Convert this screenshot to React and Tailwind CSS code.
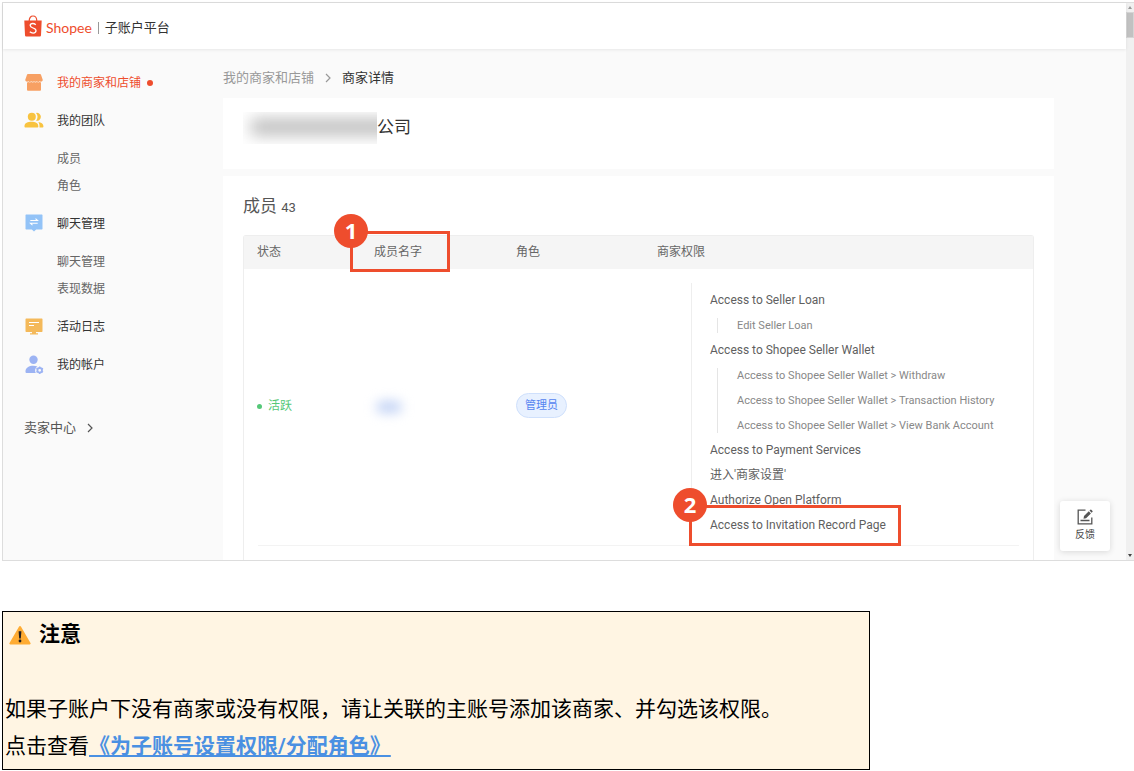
import React from "react";

const menu = [
  { label: "我的商家和店铺", icon: "shop", active: true },
  { label: "我的团队", icon: "team", children: ["成员", "角色"] },
  { label: "聊天管理", icon: "chat", children: ["聊天管理", "表现数据"] },
  { label: "活动日志", icon: "log" },
  { label: "我的帐户", icon: "account" },
];

const permissions = [
  { label: "Access to Seller Loan", children: ["Edit Seller Loan"] },
  {
    label: "Access to Shopee Seller Wallet",
    children: [
      "Access to Shopee Seller Wallet > Withdraw",
      "Access to Shopee Seller Wallet > Transaction History",
      "Access to Shopee Seller Wallet > View Bank Account",
    ],
  },
  { label: "Access to Payment Services" },
  { label: "进入'商家设置'" },
  { label: "Authorize Open Platform" },
  { label: "Access to Invitation Record Page", step: 2 },
];

const MenuIcon = ({ name }) => (
  <svg viewBox="0 0 20 20" className="h-5 w-5 shrink-0" aria-hidden="true">
    {name === "shop" && (
      <g fill="#f7a063">
        <path d="M4 1h12a1 1 0 0 1 1 .7l1.800 5.400a2 2 0 0 1-3.100 1.200 2.300 2.300 0 0 1-2.900 0 2.300 2.300 0 0 1-2.800 0 2.300 2.300 0 0 1-2.800 0 2.300 2.300 0 0 1-2.900 0 2 2 0 0 1-3.100-1.200L3 1.700a1 1 0 0 1 1-.7z" />
        <path d="M3 9.400c.6.100 1.100-.1 1.500-.4.9.6 1.900.6 2.800 0 .9.600 1.900.6 2.800 0 .9.600 1.900.6 2.800 0 .9.600 1.900.6 2.800 0 .4.300.8.4 1.300.4v7.400a.9.9 0 0 1-.9.900H3.900a.9.9 0 0 1-.9-.9z" />
      </g>
    )}
    {name === "team" && (
      <g fill="#f8c33f">
        <circle cx="7.800" cy="5.800" r="4" />
        <path d="M12 1.900a4 4 0 1 1 0 7.800 5.700 5.700 0 0 0 0-7.800z" />
        <path d="M.5 15c0-3 3.500-4.300 7-4.300s6.800 1.300 6.800 4.300v.7a.8.8 0 0 1-.8.800H1.300a.8.8 0 0 1-.8-.8z" />
        <path d="M14.200 11.100c2.900.4 5.200 1.600 5.200 3.900v.7a.8.8 0 0 1-.8.800h-3.100V15c0-1.600-.4-2.900-1.300-3.900z" />
      </g>
    )}
    {name === "chat" && (
      <>
        <path
          fill="#93c3f7"
          d="M2.200.5h15.600a.7.7 0 0 1 .7.700v13.600a.7.7 0 0 1-.7.700h-5.600L10 17.500l-2.200-2H2.200a.7.7 0 0 1-.7-.7V1.200a.7.700 0 0 1 .7-.7z"
        />
        <path
          d="M6.300 6.500h7.200l-2-1.800M13.700 9.300H6.500l2 1.800"
          fill="none"
          stroke="#fff"
          strokeWidth="1.100"
        />
      </>
    )}
    {name === "log" && (
      <>
        <path
          fill="#f4b95a"
          d="M2.200 1.500h15.600a.7.7 0 0 1 .7.700v12.100a.7.7 0 0 1-.7.700H12v1.300h2v1.200H6v-1.200h2V15H2.200a.7.7 0 0 1-.7-.7V2.200a.7.700 0 0 1 .7-.7z"
        />
        <path d="M5 5.500h10M5 8.500h5" stroke="#fff" strokeWidth="1.100" />
      </>
    )}
    {name === "account" && (
      <g fill="#9cb3f3">
        <circle cx="9.500" cy="4.700" r="4.200" />
        <path d="M1.500 16.500c0-3.800 3.600-5.700 7.700-5.700 1.600 0 3 .2 4.200.7a4.600 4.600 0 0 0-1.600 6.500H2.500a1 1 0 0 1-1-1z" />
        <circle
          cx="15.700"
          cy="15.300"
          r="2.300"
          fill="none"
          stroke="#9cb3f3"
          strokeWidth="1.800"
        />
        <path
          d="M15.700 11.500v1.400M15.700 17.700v1.400M12.400 13.400l1.200.7M17.800 16.500l1.200.7M12.400 17.200l1.200-.7M17.800 14.100l1.200-.7"
          stroke="#9cb3f3"
          strokeWidth="1.400"
        />
      </g>
    )}
  </svg>
);

const ChevronRight = () => (
  <svg
    viewBox="0 0 8 10"
    className="h-[10px] w-2"
    fill="none"
    stroke="currentColor"
    strokeWidth="1.200"
    aria-hidden="true"
  >
    <path d="M2 1l4 4-4 4" />
  </svg>
);

const StepBadge = ({ step }) => (
  <span className="absolute -top-5 -left-[19px] flex h-[34px] w-[34px] items-center justify-center rounded-full bg-[#ee4d2d] pb-[2px] font-['Open_Sans',sans-serif] text-[22px] leading-none font-bold text-white">
    {step}
  </span>
);

const Header = () => (
  <header className="relative flex h-[46px] items-center bg-white pl-[21px] shadow-[0_1px_3px_rgba(0,0,0,0.08)]">
    <a href="#home" className="flex items-center gap-1 text-[#ee4d2d]">
      <svg viewBox="0 0 18 22" className="h-[22px] w-[18px]" aria-hidden="true">
        <path
          fill="#ee4d2d"
          d="M.3 5.500h17.400L17 20.300a1.200 1.200 0 0 1-1.200 1.200H2.200A1.200 1.200 0 0 1 1 20.300z"
        />
        <path
          d="M5.200 6C5.200 3 6.800 1 9 1s3.800 2 3.800 5"
          fill="none"
          stroke="#ee4d2d"
          strokeWidth="1.200"
        />
        <path
          d="M11.800 9.700C10.600 8.700 9.700 8.500 8.800 8.500c-1.600 0-2.600.9-2.600 2.100 0 3 5.800 1.800 5.800 5 0 1.500-1.200 2.500-2.900 2.500-1.200 0-2.300-.4-3.300-1.300"
          fill="none"
          stroke="#fff"
          strokeWidth="1.300"
        />
      </svg>
      <span className="mt-1 font-[Lato,sans-serif] text-[14px] leading-5">
        Shopee
      </span>
    </a>
    <span className="mt-1 ml-[6px] h-3 w-px bg-[#999]"></span>
    <span className="mt-1 ml-[6px] text-[13px] leading-5 text-[#333]">
      子账户平台
    </span>
  </header>
);

const Sidebar = () => (
  <nav className="w-[220px] shrink-0 pt-6 pl-[21px] text-xs text-[#333]">
    <ul>
      {menu.map((item) => (
        <li key={item.label} className="mb-[18px]">
          <a
            href="#menu"
            className={
              item.active
                ? "flex items-center text-[#ee4d2d]"
                : "flex items-center"
            }
          >
            <MenuIcon name={item.icon} />
            <span className="ml-[13px] leading-5">{item.label}</span>
            {item.active && (
              <span className="ml-[6px] h-[6px] w-[6px] rounded-full bg-[#ee4d2d]"></span>
            )}
          </a>
          {item.children && (
            <ul className="mt-[15px] -mb-1 text-[#666]">
              {item.children.map((child) => (
                <li key={child} className="pl-[33px] leading-[27px]">
                  <a href="#menu">{child}</a>
                </li>
              ))}
            </ul>
          )}
        </li>
      ))}
    </ul>
    <a
      href="#seller"
      className="mt-[43px] flex items-center gap-[10px] text-[13px] leading-5 text-[#555]"
    >
      卖家中心
      <ChevronRight />
    </a>
  </nav>
);

const PermissionList = () => (
  <ul className="border-l border-[#eee] pt-[5px] pb-[7px] pl-[18px] leading-[25px] text-[#5f5f5f]">
    {permissions.map((item) => (
      <li key={item.label} className="relative">
        {item.label}
        {item.children && (
          <ul className="relative pl-[27px] text-[11px] text-[#888] before:absolute before:inset-y-[5px] before:left-[7px] before:w-px before:bg-[#e5e5e5]">
            {item.children.map((child) => (
              <li key={child}>{child}</li>
            ))}
          </ul>
        )}
        {item.step && (
          <span className="absolute -top-2 -left-[21px] h-[41px] w-[212px] border-[3px] border-[#ee4d2d]">
            <StepBadge step={item.step} />
          </span>
        )}
      </li>
    ))}
  </ul>
);

const MemberTable = () => (
  <div className="rounded-t-[3px] border border-b-0 border-[#eee] pb-[14px]">
    <table className="w-full table-fixed text-left text-xs text-[#666]">
      <colgroup>
        <col className="w-[117px]" />
        <col className="w-[142px]" />
        <col className="w-[141px]" />
        <col />
      </colgroup>
      <thead className="bg-[#f5f5f5]">
        <tr className="h-[33px]">
          <th className="pb-[2px] pl-[13px] font-normal">状态</th>
          <th className="relative pb-[2px] pl-[13px] font-normal">
            成员名字
            <span className="absolute -top-[5px] -left-[11px] h-[41px] w-[100px] border-[3px] border-[#ee4d2d]">
              <StepBadge step={1} />
            </span>
          </th>
          <th className="pb-[2px] pl-[13px] font-normal">角色</th>
          <th className="pb-[2px] pl-[13px] font-normal">商家权限</th>
        </tr>
      </thead>
      <tbody>
        <tr>
          <td className="pb-[2px] pl-[13px] text-[#55c878]">
            <span className="flex items-center gap-[6px]">
              <span className="h-[5px] w-[5px] rounded-full bg-[#55c878]"></span>
              活跃
            </span>
          </td>
          <td className="pl-[15px]">
            <div className="h-3 w-[26px] rounded-full bg-[#c3d3f5] blur-[6px]"></div>
          </td>
          <td className="pb-1 pl-[13px]">
            <span className="inline-block rounded-full border border-[#cfe0fc] bg-[#e8f1ff] px-2 text-[11px] leading-[23px] text-[#5584f0]">
              管理员
            </span>
          </td>
          <td className="pt-[14px] pl-[47px]">
            <PermissionList />
          </td>
        </tr>
      </tbody>
    </table>
    <hr className="mx-[14px] border-[#f3f3f3]" />
  </div>
);

const Scrollbar = () => (
  <div className="flex w-2 shrink-0 flex-col items-center bg-[#f0f0f0]">
    <span className="my-[3px] h-0 w-0 border-x-2 border-b-[3px] border-x-transparent border-b-[#999]"></span>
    <span className="h-[26px] w-full border border-[#d5d5d5] bg-[#c1c1c1]"></span>
    <span className="mt-auto mb-[3px] h-0 w-0 border-x-2 border-t-[3px] border-x-transparent border-t-[#444]"></span>
  </div>
);

const FeedbackButton = () => (
  <button
    type="button"
    className="absolute right-4 bottom-[9px] flex h-[50px] w-[50px] flex-col items-center rounded-[3px] bg-white pt-2 text-[10px] leading-5 text-[#444] shadow-[0_1px_6px_rgba(0,0,0,0.14)]"
  >
    <svg
      viewBox="0 0 16 16"
      className="h-4 w-4"
      fill="none"
      stroke="#555"
      strokeWidth="1.300"
      aria-hidden="true"
    >
      <path d="M8.500 1.200H1.200v13.600h13.600V8.500M3.500 11.500h9" />
      <path
        fill="#555"
        stroke="none"
        d="M6.500 9.700l.5-2.600 4.800-4.800 2.100 2.100-4.800 4.800zM12.500 1.600l.9-.9a.6.6 0 0 1 .9 0l1.200 1.200a.6.6 0 0 1 0 .9l-.9.900z"
      />
    </svg>
    反馈
  </button>
);

const Notice = () => (
  <section className="mt-[50px] w-[868px] max-w-full border border-black bg-[#fff5e3] px-[2px] pt-1 pb-1 text-[21px] leading-[37px] text-black">
    <h2 className="mb-[38px] flex items-center gap-2 pl-1 font-bold">
      <svg viewBox="0 0 22 20" className="h-5 w-[22px]" aria-hidden="true">
        <path
          fill="#ffac33"
          d="M1.400 19.500a1 1 0 0 1-.9-1.500L10.100 1.500a1 1 0 0 1 1.800 0L21.500 18a1 1 0 0 1-.9 1.500z"
        />
        <path fill="#231f20" d="M9.600 6.200h2.800l-.6 7.300h-1.600z" />
        <circle cx="11" cy="16" r="1.400" fill="#231f20" />
      </svg>
      注意
    </h2>
    <p>如果子账户下没有商家或没有权限，请让关联的主账号添加该商家、并勾选该权限。</p>
    <p>
      点击查看
      <a href="#guide" className="font-bold text-[#4a90e2] underline">
        《为子账号设置权限/分配角色》
      </a>
    </p>
  </section>
);

const App = () => {
  return (
    <div
      lang="zh-CN"
      className="bg-white pt-[2px] pl-[2px] font-[Roboto,'Noto_Sans_CJK_SC',sans-serif]"
    >
      <div className="flex border-y border-l border-[#ddd]">
        <div className="relative min-w-0 flex-1 bg-[#fafafa]">
          <Header />
          <div className="flex">
            <Sidebar />
            <main className="mr-[72px] min-w-0 flex-1">
              <div className="flex items-center gap-[10px] pt-[19px] pb-[10px] text-[13px] leading-5 text-[#999]">
                <a href="#shops">我的商家和店铺</a>
                <ChevronRight />
                <span className="text-[#333]">商家详情</span>
              </div>
              <section className="flex h-[71px] items-start bg-white pt-[14px] pl-5">
                <div className="h-8 w-[134px] overflow-hidden pt-[7px] pl-2">
                  <div className="h-4 w-[150px] bg-[#bbb] blur-[8px]"></div>
                </div>
                <h1 className="text-[17px] leading-[30px] text-[#333]">公司</h1>
              </section>
              <section className="mt-[7px] bg-white px-5 pt-[15px]">
                <h2 className="mb-3 text-[17px] leading-[30px] text-[#555]">
                  成员 <span className="text-[13px]">43</span>
                </h2>
                <MemberTable />
              </section>
            </main>
          </div>
          <FeedbackButton />
        </div>
        <Scrollbar />
      </div>
      <Notice />
    </div>
  );
};

export default App;
